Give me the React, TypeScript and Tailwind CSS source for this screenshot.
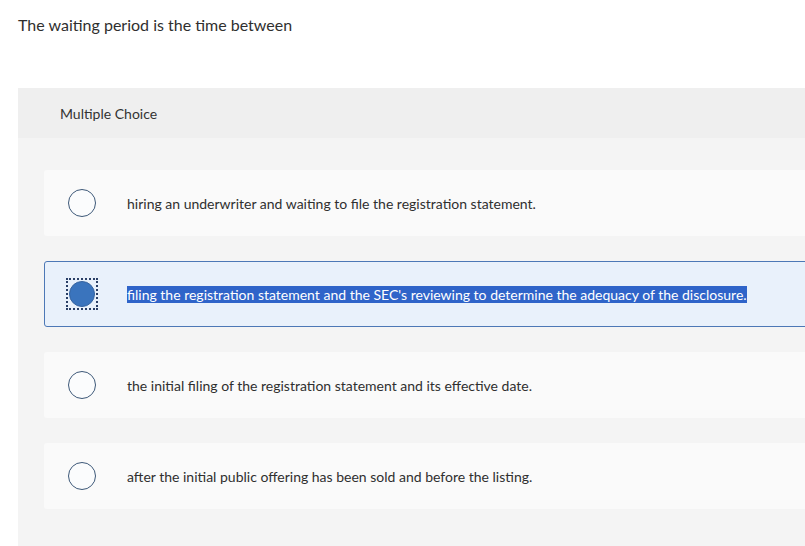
import { useState } from 'react';

const choices = [
  'hiring an underwriter and waiting to file the registration statement.',
  "filing the registration statement and the SEC's reviewing to determine the adequacy of the disclosure.",
  'the initial filing of the registration statement and its effective date.',
  'after the initial public offering has been sold and before the listing.',
];

function Radio({ checked }: { checked: boolean }) {
  if (checked) {
    return (
      <span className="flex h-[32px] w-[32px] items-center justify-center border-2 border-dotted border-[#2a3f66]">
        <span className="h-[26px] w-[26px] rounded-full border border-[#35639f] bg-[#3a74bd]" />
      </span>
    );
  }
  return (
    <span className="flex h-[32px] w-[32px] items-center justify-center">
      <span className="h-[28px] w-[28px] rounded-full border-[1.5px] border-[#3d5878] bg-[#fbfcfd]" />
    </span>
  );
}

export default function App() {
  const [selected, setSelected] = useState(1);

  return (
    <div className="h-[546px] w-[805px] overflow-hidden bg-white font-['Lato','Open_Sans',sans-serif] text-[#2f2f2f]">
      <p className="pl-[18px] pt-[15px] text-[16px] leading-[20px]">The waiting period is the time between</p>

      <div className="ml-[18px] mt-[53px] w-[800px] bg-[#f4f4f4] pb-[40px]">
        <div className="flex h-[50px] items-center bg-[#efefef] pl-[42px] pt-[1px] text-[14px] text-[#333]">Multiple Choice</div>

        <div className="flex flex-col gap-[25px] pl-[26px] pt-[32px]">
          {choices.map((c, i) => {
            const on = i === selected;
            return (
              <button
                key={i}
                onClick={() => setSelected(i)}
                className={`flex h-[66px] w-[780px] items-center rounded-[3px] text-left ${
                  on ? 'border border-[#4d78b6] bg-[#e9f1fb] pl-[21px]' : 'bg-[#fafafa] pl-[22px]'
                }`}
              >
                <Radio checked={on} />
                <span className="ml-[29px] pt-[1px] text-[14px] leading-[18px]">
                  {on ? <span className="bg-[#2f64c9] text-white">{c}</span> : c}
                </span>
              </button>
            );
          })}
        </div>
      </div>
    </div>
  );
}
